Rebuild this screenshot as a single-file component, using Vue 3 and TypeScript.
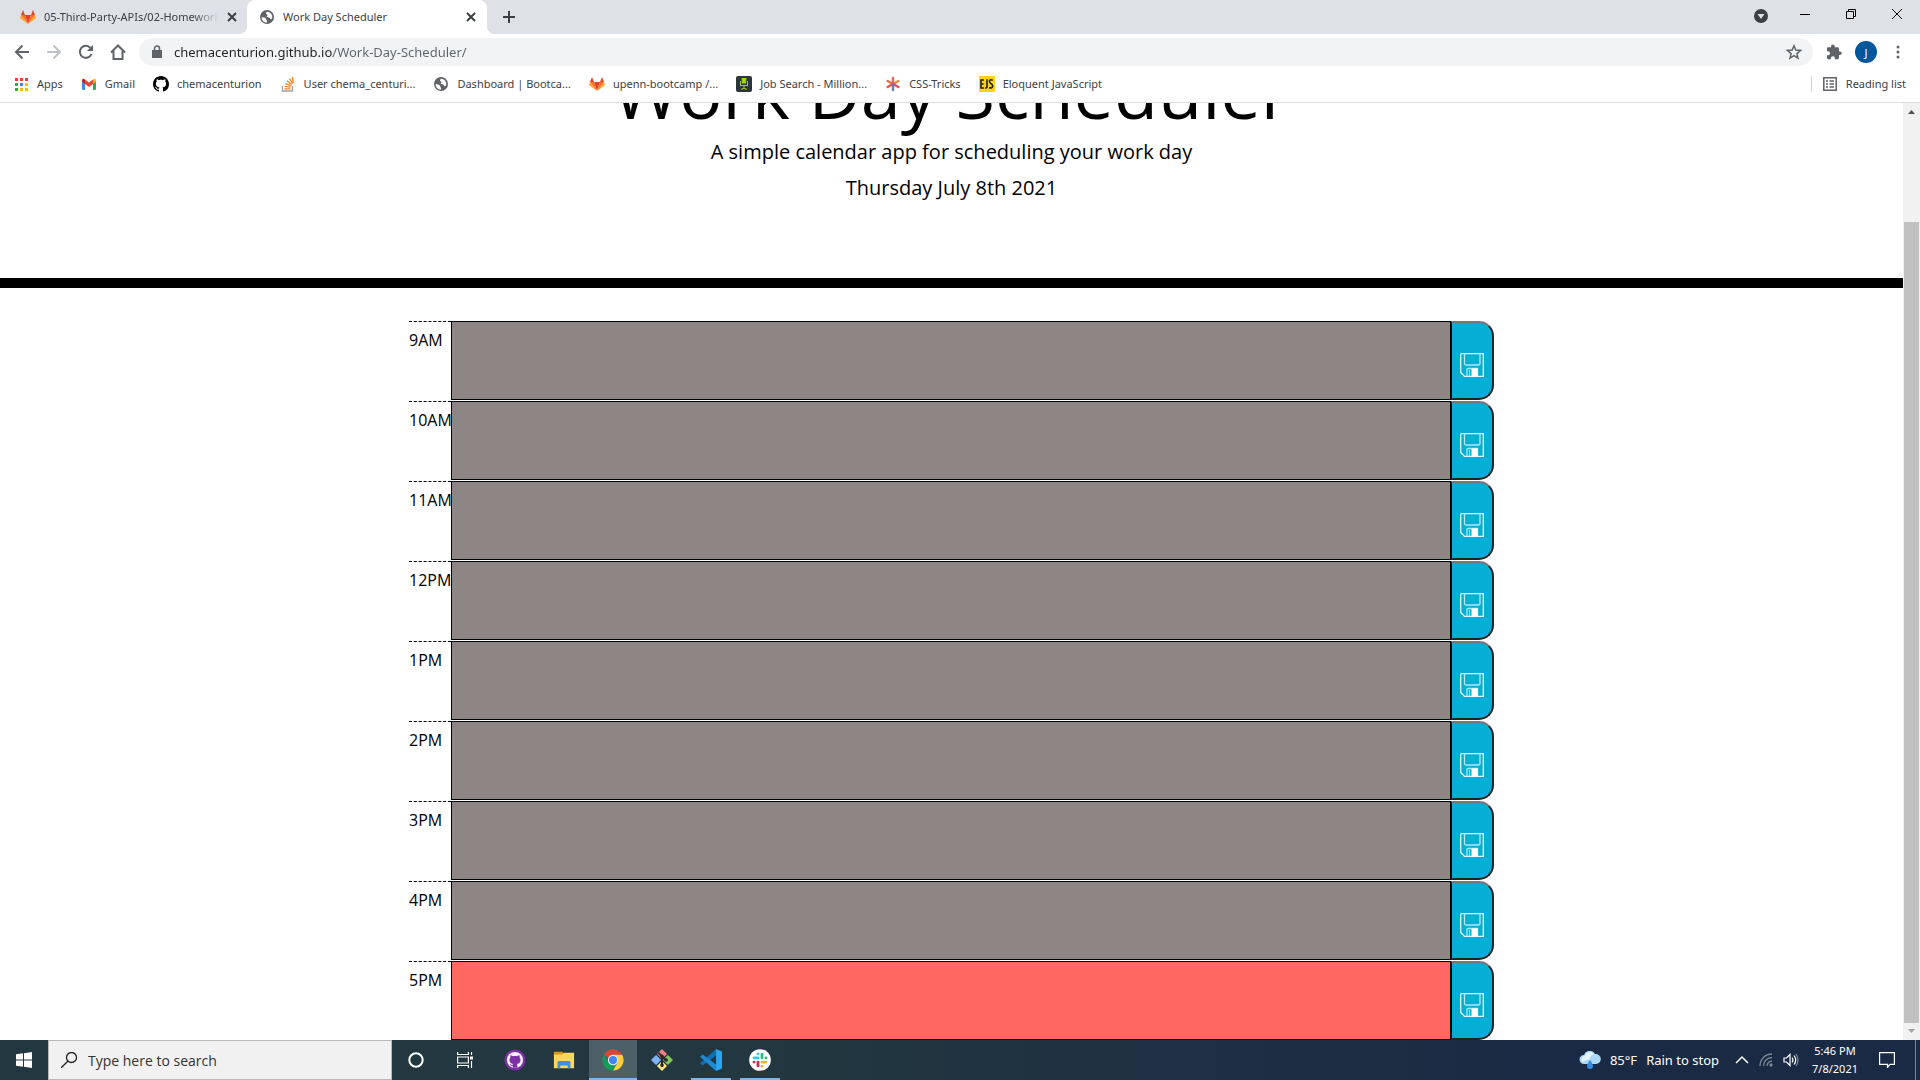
<script setup lang="ts">
import { reactive, ref } from 'vue'

interface Bookmark {
  label: string
  icon: string
}

interface Slot {
  hour: string
  state: 'past' | 'present' | 'future'
  note: string
}

interface TaskApp {
  name: string
  icon: string
  state: '' | 'open' | 'active'
}

const address = ref('chemacenturion.github.io/Work-Day-Scheduler/')
const query = ref('')

const bookmarks: Bookmark[] = [
  { label: 'Apps', icon: 'apps' },
  { label: 'Gmail', icon: 'gmail' },
  { label: 'chemacenturion', icon: 'github' },
  { label: 'User chema_centuri...', icon: 'stack' },
  { label: 'Dashboard | Bootca...', icon: 'globe' },
  { label: 'upenn-bootcamp /...', icon: 'gitlab' },
  { label: 'Job Search - Million...', icon: 'chair' },
  { label: 'CSS-Tricks', icon: 'asterisk' },
  { label: 'Eloquent JavaScript', icon: 'ejs' },
]

const hours = ['9AM', '10AM', '11AM', '12PM', '1PM', '2PM', '3PM', '4PM', '5PM']
const slots = reactive<Slot[]>(
  hours.map((hour) => ({ hour, state: hour === '5PM' ? 'present' : 'past', note: '' })),
)

const apps: TaskApp[] = [
  { name: 'GitHub Desktop', icon: 'desktop', state: '' },
  { name: 'File Explorer', icon: 'folder', state: '' },
  { name: 'Google Chrome', icon: 'chrome', state: 'active' },
  { name: 'Git', icon: 'git', state: '' },
  { name: 'Visual Studio Code', icon: 'vscode', state: 'open' },
  { name: 'Slack', icon: 'slack', state: 'open' },
]

function save(slot: Slot) {
  localStorage.setItem(slot.hour, slot.note)
}
</script>

<template>
  <div class="screen">
    <svg class="sprite" aria-hidden="true">
      <symbol id="gitlab" viewBox="0 0 16 16">
        <path fill="#e24329" d="M8 15 11 6H5z" />
        <path fill="#fc6d26" d="M8 15 5 6H1zM8 15 11 6h4z" />
        <path fill="#fca326" d="M1 6 0 9l8 6zM15 6l1 3-8 6z" />
        <path fill="#e24329" d="M1 6h4L3 1zM15 6h-4l2-5z" />
      </symbol>
      <symbol id="globe" viewBox="0 0 16 16">
        <circle cx="8" cy="8" r="7" fill="#5f6368" />
        <path fill="#fff" d="M2.500 8.200c2 0 3.400.2 4.300 1.200.8.9.2 1.600 1 2 .6.4.2 1.500.2 2.100-3 .1-5.400-2.300-5.500-5.300zM8.500 2.800c-1.200.5-1.700 1-1.500 1.800.2.700 1.400.600 1.500 1.400.1.900-1 1-.8 1.800.2.900 2.300.3 3 1.200.5.700.400 1.300 1.200 1.300.9 0 1.400-1.300 1.400-2.600C13 5 11 3 8.500 2.800z" />
      </symbol>
      <symbol id="apps" viewBox="0 0 16 16">
        <path fill="#ea4335" d="M2 2h3v3H2zM7 2h3v3H7zM12 2h3v3h-3z" />
        <path fill="#34a853" d="M2 7h3v3H2zM2 12h3v3H2z" />
        <path fill="#4285f4" d="M7 7h3v3H7z" />
        <path fill="#fbbc04" d="M12 7h3v3h-3zM7 12h3v3H7zM12 12h3v3h-3z" />
      </symbol>
      <symbol id="gmail" viewBox="0 0 16 16">
        <path fill="#4285f4" d="M1 4.500 4 7v7H2q-1 0-1-1z" />
        <path fill="#34a853" d="M15 4.500 12 7v7h2q1 0 1-1z" />
        <path fill="#ea4335" d="M4 3.500 8 6.500l4-3V8l-4 3-4-3z" />
        <path fill="#c5221f" d="M1 4.500C1 2.500 2.800 2.500 4 3.500V8L1 5.600z" />
        <path fill="#fbbc04" d="M15 4.500c0-2-1.800-2-3-1V8l3-2.400z" />
      </symbol>
      <symbol id="github" viewBox="0 0 16 16">
        <path d="M8 0C3.580 0 0 3.580 0 8c0 3.540 2.290 6.530 5.470 7.590.4.070.55-.17.55-.38 0-.19-.01-.82-.01-1.490-2.010.37-2.530-.49-2.690-.94-.09-.23-.48-.94-.82-1.130-.28-.15-.68-.52-.01-.53.63-.01 1.080.58 1.230.82.72 1.210 1.870.87 2.330.66.07-.52.28-.87.51-1.070-1.780-.2-3.640-.89-3.640-3.950 0-.87.31-1.590.82-2.150-.08-.2-.36-1.020.08-2.120 0 0 .67-.21 2.200.82.64-.18 1.320-.27 2-.27s1.360.09 2 .27c1.530-1.040 2.200-.82 2.200-.82.44 1.100.16 1.920.08 2.120.51.56.82 1.270.82 2.150 0 3.070-1.870 3.750-3.650 3.950.29.25.54.73.54 1.480 0 1.070-.01 1.930-.01 2.200 0 .21.15.46.55.38A8.010 8.010 0 0 0 16 8c0-4.420-3.580-8-8-8z" />
      </symbol>
      <symbol id="stack" viewBox="0 0 16 16">
        <path fill="none" stroke="#9da2a6" stroke-width="1.300" d="M2.500 10v5h10v-5" />
        <path fill="none" stroke="#f48024" stroke-width="1.300" d="M4.500 12.800h6M4.600 10.300l6 .9M5.300 7.600l5.600 2M6.900 4.800l4.800 3.600M9.300 2.500l3.400 5M12.300 1l1 5.800" />
      </symbol>
      <symbol id="chair" viewBox="0 0 16 16">
        <rect width="16" height="16" rx="2" fill="#2c353c" />
        <path fill="#9fd414" d="M5.500 2h5l-.5 5.500H6zM4 5h1v4h6V5h1v5H4zM7.500 10h1v2h-1zM5 13l3-1.500 3 1.500v1l-3-1.200L5 14z" />
      </symbol>
      <symbol id="asterisk" viewBox="0 0 16 16">
        <g fill="none" stroke-width="2.400" stroke-linecap="round">
          <path stroke="#ec6a4c" d="M8 8V2M8 8 2.600 5" />
          <path stroke="#e8533c" d="M8 8 2.600 11" />
          <path stroke="#f0883e" d="m8 8 5.400-3" />
          <path stroke="#d84b7a" d="m8 8 5.400 3" />
          <path stroke="#5a7fb8" d="M8 9v5" />
        </g>
      </symbol>
      <symbol id="ejs" viewBox="0 0 16 16">
        <rect width="16" height="16" fill="#fdd41c" />
        <path fill="none" stroke="#222" stroke-width="1.600" d="M5 4H2v8h3M2 8h2.600M8 3.200V11q0 1.200-2 1M13.800 4.200Q10.300 3 10.500 5.500c0 2 3.200 2.500 3.200 4.600q-.2 2.300-3.700 1.600" />
      </symbol>
      <symbol id="desktop" viewBox="0 0 24 24">
        <circle cx="12" cy="12" r="11.500" fill="#7d2fa3" />
        <circle cx="12" cy="12" r="8.800" fill="#f4eef8" />
        <path fill="#7d2fa3" d="M9.500 20.500v-2.300c-2 .4-2.700-.8-3.300-1.700.9-.1 1.500 1.200 3.300.8l.4-1c-2.500-.4-3.900-1.600-3.900-4.300 0-1.200.4-2 1-2.700-.2-.8-.1-1.700.2-2.500 1 0 1.800.5 2.500 1 1.500-.4 3.100-.4 4.600 0 .7-.5 1.500-1 2.500-1 .3.800.4 1.700.2 2.500.6.7 1 1.500 1 2.700 0 2.700-1.400 3.900-3.900 4.300.3.400.5.900.5 1.700v2.500z" />
      </symbol>
      <symbol id="folder" viewBox="0 0 24 24">
        <path fill="#d99a10" d="M1 3h9l2 2v3H1z" />
        <path fill="#ffd65c" d="M1 6h9l2-2h11v17H1z" />
        <path fill="#3a94dc" d="M5 21v-6.500q0-1.500 1.500-1.500h11q1.500 0 1.500 1.500V21h-3v-3H8v3z" />
      </symbol>
      <symbol id="chrome" viewBox="0 0 24 24">
        <path fill="#db4437" d="M12 12 2.040 6.250A11.500 11.500 0 0 1 21.960 6.250H12z" />
        <path fill="#0f9d58" d="M2.040 6.250A11.500 11.500 0 0 0 12 23.500L17 14.900 12 12l-5 2.900z" />
        <path fill="#ffcd40" d="M21.960 6.250A11.500 11.500 0 0 1 12 23.500l5-8.600-.1-5.800L12 6.250z" />
        <circle cx="12" cy="12" r="5.600" fill="#f1f1f1" />
        <circle cx="12" cy="12" r="4.500" fill="#4285f4" />
      </symbol>
      <symbol id="git" viewBox="0 0 24 24">
        <path fill="#f47c7c" d="m12 0 5.500 5.500L12 11 6.500 5.500z" />
        <path fill="#80b3ff" d="m5.500 6.500 5.500 5.500-5.500 5.500L0 12z" />
        <path fill="#7ecb5c" d="m18.500 6.500L24 12l-5.500 5.500L13 12z" />
        <path fill="#ffe680" d="m12 13 5.500 5.500L12 24l-5.500-5.500z" />
        <path fill="none" stroke="#2a2a2a" stroke-width="2.200" d="M8 4l4 4v11M12 8l4 4" />
        <circle cx="12" cy="8" r="2" fill="#2a2a2a" />
        <circle cx="16.500" cy="12" r="2" fill="#2a2a2a" />
        <circle cx="12" cy="17.500" r="2" fill="#2a2a2a" />
      </symbol>
      <symbol id="vscode" viewBox="0 0 24 24">
        <path fill="#0f6fb5" d="M17.500 0v7L3 18 0 15.500z" />
        <path fill="#1e8ad2" d="M0 8.500 3 6l14.500 11v7z" />
        <path fill="#2aa5ee" d="M17.500 0 24 2.700v18.600L17.500 24z" />
      </symbol>
      <symbol id="slack" viewBox="0 0 24 24">
        <circle cx="12" cy="12" r="11.800" fill="#fff" />
        <g fill="none" stroke-width="3" stroke-linecap="round">
          <path stroke="#36c5f0" d="M5.500 9.700h4.300M9.800 5.300v.1" />
          <path stroke="#2eb67d" d="M14.200 5.500v4.200M18.500 9.700h.1" />
          <path stroke="#ecb22e" d="M14.200 14.200h4.300M14.200 18.600v.1" />
          <path stroke="#e01e5a" d="M9.800 14.200v4.300M5.500 14.200h-.1" />
        </g>
      </symbol>
      <symbol id="floppy" viewBox="0 0 24 24">
        <path fill="none" stroke="#e4f9fd" stroke-width="1.300" d="M.7 1.700q0-1 1-1h21.600v22.600H4.500L.7 19.500z" />
        <path fill="none" stroke="#aee9f5" stroke-width="1.300" d="M4.500.5v10q0 1.500 1.500 1.500h12.500q1.500 0 1.500-1.500V.5M7 23.500v-7q0-1 1-1h9.500v8" />
        <path fill="#fff" d="M11.500 15.500h6.500v8h-6.500z" />
        <path stroke="#9be3f2" d="M9.500 17v6" />
      </symbol>
    </svg>

    <nav class="tabs" aria-label="Tabs">
      <div class="tab first">
        <svg class="i16"><use href="#gitlab" /></svg>
        <span class="tab-title fade">05-Third-Party-APIs/02-Homework</span>
        <button class="plain" aria-label="Close tab">
          <svg width="10" height="10" stroke="#3c4043" stroke-width="2"><path d="m1 1 8 8M9 1 1 9" /></svg>
        </button>
      </div>
      <div class="tab current">
        <svg class="i16"><use href="#globe" /></svg>
        <span class="tab-title">Work Day Scheduler</span>
        <button class="plain" aria-label="Close tab">
          <svg width="10" height="10" stroke="#3c4043" stroke-width="2"><path d="m1 1 8 8M9 1 1 9" /></svg>
        </button>
      </div>
      <button class="plain add" aria-label="New tab">
        <svg width="12" height="12" stroke="#3c4043" stroke-width="2"><path d="M6 0v12M0 6h12" /></svg>
      </button>
      <div class="window-buttons">
        <button class="plain" aria-label="Search tabs">
          <svg width="14" height="14"><circle cx="7" cy="7" r="7" fill="#3c4043" /><path fill="#dee1e6" d="M3.500 5h7L7 10z" /></svg>
        </button>
        <button class="plain" aria-label="Minimize">
          <svg width="10" height="10"><path fill="#000" d="M0 5h10v1H0z" /></svg>
        </button>
        <button class="plain" aria-label="Restore">
          <svg width="10" height="10" fill="none" stroke="#000"><path d="M.5 2.500h7v7h-7zM2.500 2.500v-2h7v7h-2" /></svg>
        </button>
        <button class="plain" aria-label="Close">
          <svg width="10" height="10" stroke="#000"><path d="m0 0 10 10M10 0 0 10" /></svg>
        </button>
      </div>
    </nav>

    <div class="toolbar">
      <div class="nav-buttons">
        <button class="plain" aria-label="Back">
          <svg class="i16" fill="none" stroke="#5f6368" stroke-width="2"><path d="M15 8H2M8.500 1.500 2 8l6.500 6.500" /></svg>
        </button>
        <button class="plain" aria-label="Forward">
          <svg class="i16" fill="none" stroke="#bdc1c6" stroke-width="2"><path d="M1 8h13M7.500 1.500 14 8l-6.500 6.500" /></svg>
        </button>
        <button class="plain" aria-label="Reload">
          <svg class="i16"><path fill="none" stroke="#5f6368" stroke-width="2" d="M13.500 10A6 6 0 1 1 12.500 4" /><path fill="#5f6368" d="M15 1v6H9z" /></svg>
        </button>
        <button class="plain" aria-label="Home">
          <svg class="i16" fill="none" stroke="#5f6368" stroke-width="2"><path d="M1 8.500 8 1.500l7 7M3.500 7v8h9V7" /></svg>
        </button>
      </div>
      <label class="omnibox">
        <svg width="10" height="14"><path fill="#5f6368" d="M0 5h10v8H0z" /><path fill="none" stroke="#5f6368" stroke-width="1.500" d="M2.500 5.500V3.500a2.500 2.500 0 0 1 5 0v2" /></svg>
        <input v-model="address" type="text" aria-label="Address" />
        <button class="plain" aria-label="Bookmark this page">
          <svg class="i16" fill="none" stroke="#5f6368" stroke-width="1.500"><path d="m8 1.800 1.800 4.300 4.700.4-3.600 3.100 1.100 4.600L8 11.700l-4 2.500 1.100-4.600-3.600-3.100 4.700-.4z" /></svg>
        </button>
      </label>
      <button class="plain" aria-label="Extensions">
        <svg class="i16" fill="#5f6368"><path d="M14 7.500h-1V4.600q0-1.400-1.400-1.400H8.800V2.400a1.900 1.900 0 0 0-3.800 0v.8H2.300Q1 3.200 1 4.600v2.600h1a2 2 0 0 1 0 4.100H1v2.500q0 1.400 1.300 1.400h2.600v-1a2 2 0 0 1 4 0v1h2.700q1.400 0 1.400-1.400v-2.700h1a1.800 1.800 0 0 0 0-3.600z" /></svg>
      </button>
      <button class="plain avatar" aria-label="Profile">J</button>
      <button class="plain" aria-label="Menu">
        <svg class="i16" fill="#5f6368"><circle cx="8" cy="3" r="1.500" /><circle cx="8" cy="8" r="1.500" /><circle cx="8" cy="13" r="1.500" /></svg>
      </button>
    </div>

    <nav class="bookmarks" aria-label="Bookmarks">
      <a v-for="mark in bookmarks" :key="mark.label" href="#">
        <svg class="i16"><use :href="'#' + mark.icon" /></svg>{{ mark.label }}
      </a>
      <a class="reading" href="#">
        <svg class="i16" fill="none" stroke="#5f6368" stroke-width="1.500"><path d="M1.800 1.800h12.400v12.400H1.800zM4 5h2M7.500 5H12M4 8h2M7.500 8H12M4 11h2M7.500 11H12" /></svg>Reading list
      </a>
    </nav>

    <div class="viewport">
      <main class="page">
        <header>
          <h1>Work Day Scheduler</h1>
          <p>A simple calendar app for scheduling your work day</p>
          <p>Thursday July 8th 2021</p>
        </header>
        <section class="planner">
          <div v-for="slot in slots" :key="slot.hour" class="row">
            <label :for="'slot-' + slot.hour">{{ slot.hour }}</label>
            <textarea :id="'slot-' + slot.hour" v-model="slot.note" :class="slot.state"></textarea>
            <button :aria-label="'Save ' + slot.hour" @click="save(slot)">
              <svg width="24" height="24"><use href="#floppy" /></svg>
            </button>
          </div>
        </section>
      </main>
      <div class="scrollbar" aria-hidden="true">
        <svg width="17" height="17"><path fill="#505050" d="M5 11h7L8.500 7z" /></svg>
        <div class="track"><div class="thumb"></div></div>
        <svg width="17" height="17"><path fill="#a3a3a3" d="M5 6h7l-3.500 4z" /></svg>
      </div>
    </div>

    <footer class="taskbar">
      <button class="plain start" aria-label="Start">
        <svg class="i16" fill="#fff"><path d="M0 2.300 7 1.300V7.500H0zM8 1.200 16 0v7.500H8zM0 8.500h7v6.200l-7-1zM8 8.500h8V16l-8-1.200z" /></svg>
      </button>
      <label class="search">
        <svg class="i16" fill="none" stroke="#222" stroke-width="1.300"><circle cx="10.500" cy="5.500" r="5" /><path d="M7 9 0 16" /></svg>
        <input v-model="query" type="text" placeholder="Type here to search" aria-label="Search" />
      </label>
      <button class="plain app" aria-label="Cortana">
        <svg class="i16" fill="none" stroke="#fff" stroke-width="2"><circle cx="8" cy="8" r="6.700" /></svg>
      </button>
      <button class="plain app views" aria-label="Task View">
        <svg class="i16" fill="none" stroke="#fff" stroke-width="1.200"><path d="M.6 0v2.500h10.800V0M.6 5h10.800v6H.6zM.6 16v-2.500h10.800V16M14.500 0v3M14.500 9v7" /><path fill="#fff" stroke="none" d="M13 4.500h3v3h-3z" /></svg>
      </button>
      <button v-for="app in apps" :key="app.name" class="plain app" :class="app.state" :aria-label="app.name">
        <svg :width="22" :height="22"><use :href="'#' + app.icon" /></svg>
      </button>
      <div class="tray">
        <button class="plain weather">
          <svg width="22" height="18" viewBox="0 0 22 18"><path fill="#a9d8f7" d="M5 13a4.500 4.500 0 0 1 0-9 6 6 0 0 1 11-1 5 5 0 0 1 1.500 10z" /><path fill="#e4f3fd" d="M4 11.500a4 4 0 0 1 2-7 5 5 0 0 1 9-1c-4 0-3 4-5 5s-4 0-6 3z" /><path fill="#2e8be6" d="M11 9q3 4 3 6a3 3 0 0 1-6 0q0-2 3-6z" /></svg>
          <span>85°F</span><span>Rain to stop</span>
        </button>
        <button class="plain" aria-label="Show hidden icons">
          <svg width="14" height="14" fill="none" stroke="#fff" stroke-width="1.500"><path d="m1 10 6-6 6 6" /></svg>
        </button>
        <button class="plain" aria-label="Network">
          <svg width="14" height="14" fill="none" stroke="#7d8796" stroke-width="1.300"><path d="M1 13A12 12 0 0 1 13 1M4.500 13A8.500 8.500 0 0 1 13 4.500M8 13a5 5 0 0 1 5-5" /><circle cx="12" cy="12" r="1" fill="#7d8796" /></svg>
        </button>
        <button class="plain" aria-label="Volume">
          <svg class="i16" fill="none" stroke="#fff" stroke-width="1.200"><path d="M1 6h2.500L7 2.500v11L3.500 10H1zM9 5.500q2 2.500 0 5M11 3.500q3.500 4.500 0 9" /><path stroke="#7d8796" d="M13 2q4 6 0 12" /></svg>
        </button>
        <button class="plain clock"><span>5:46 PM</span><span>7/8/2021</span></button>
        <button class="plain" aria-label="Notifications">
          <svg class="i16" fill="none" stroke="#fff" stroke-width="1.200"><path d="M.6.6h14.800v11.800H11l-2.500 3v-3H.6z" /></svg>
        </button>
        <button class="plain show-desktop" aria-label="Show desktop"></button>
      </div>
    </footer>
  </div>
</template>

<style>
body {
  margin: 0;
}
</style>

<style scoped>
.screen {
  display: flex;
  flex-direction: column;
  height: 100vh;
  overflow: hidden;
  background: #fff;
  font-family: "Noto Sans", "Open Sans", sans-serif;
  font-size: 11px;
  color: #3c4043;
}

.screen * {
  box-sizing: border-box;
}

.sprite {
  display: block;
  width: 0;
  height: 0;
}

svg {
  display: block;
  flex: none;
}

.i16 {
  width: 16px;
  height: 16px;
}

.plain {
  display: flex;
  align-items: center;
  justify-content: center;
  flex: none;
  padding: 0;
  border: 0;
  background: none;
  font: inherit;
  color: inherit;
}

.tabs {
  display: flex;
  flex: none;
  height: 34px;
  background: #dee1e6;
}

.tab {
  position: relative;
  display: flex;
  align-items: center;
  gap: 8px;
  width: 240px;
  padding: 0 11px 1px 12px;
}

.tab.first {
  width: 247px;
  padding: 0 10px 1px 20px;
}

.tab-title {
  flex: 1;
  overflow: hidden;
  white-space: nowrap;
}

.fade {
  -webkit-mask-image: linear-gradient(90deg, #000 85%, transparent);
  mask-image: linear-gradient(90deg, #000 85%, transparent);
}

.current {
  background: #fff;
  border-radius: 8px 8px 0 0;
}

.current::before,
.current::after {
  content: "";
  position: absolute;
  bottom: 0;
  width: 8px;
  height: 8px;
}

.current::before {
  right: 100%;
  background: radial-gradient(circle at 0 0, transparent 8px, #fff 8px);
}

.current::after {
  left: 100%;
  background: radial-gradient(circle at 100% 0, transparent 8px, #fff 8px);
}

.add {
  margin-left: 16px;
}

.window-buttons {
  display: flex;
  align-items: center;
  gap: 36px;
  margin-left: auto;
  padding: 0 18px 6px 0;
}

.window-buttons .plain:first-child {
  margin: 4px -4px 0 0;
}

.toolbar {
  display: flex;
  align-items: center;
  flex: none;
  gap: 13px;
  height: 36px;
  padding: 0 14px;
}

.nav-buttons {
  display: flex;
  gap: 16px;
}

.omnibox {
  display: flex;
  flex: 1;
  align-items: center;
  gap: 12px;
  height: 28px;
  padding: 0 11px 0 13px;
  border-radius: 14px;
  background: #f1f3f4;
}

.omnibox input {
  flex: 1;
  min-width: 0;
  padding: 0;
  border: 0;
  outline: 0;
  font: 13px "Noto Sans", "Open Sans", sans-serif;
  color: transparent;
  background: linear-gradient(90deg, #202124 159px, #5f6368 159px);
  -webkit-background-clip: text;
  background-clip: text;
}

.avatar {
  width: 22px;
  height: 22px;
  border-radius: 50%;
  background: #01579b;
  color: #fff;
}

.bookmarks {
  display: flex;
  align-items: center;
  flex: none;
  gap: 18px;
  height: 33px;
  padding: 0 14px 5px 13px;
  border-bottom: 1px solid #dadce0;
}

.bookmarks a {
  display: flex;
  align-items: center;
  gap: 8px;
  color: #3c4043;
  white-space: nowrap;
  text-decoration: none;
}

.bookmarks .reading {
  margin-left: auto;
  padding-left: 10px;
  border-left: 1px solid #cfd1d5;
}

.viewport {
  display: flex;
  flex: 1;
  min-height: 0;
}

.page {
  display: flex;
  flex: 1;
  flex-direction: column;
  justify-content: flex-end;
  overflow: hidden;
  font-family: "Open Sans", "Noto Sans", sans-serif;
  color: #000;
}

header {
  flex: none;
  height: 240px;
  margin-bottom: 33px;
  border-bottom: 10px solid #000;
  text-align: center;
}

h1 {
  margin: 0 0 3px;
  font-size: 72px;
  font-weight: 400;
  line-height: 86px;
}

header p {
  margin: 0 0 6px;
  font-size: 20px;
  line-height: 30px;
}

.planner {
  flex: none;
  width: 100%;
  max-width: 1085px;
  margin: 0 auto;
}

.row {
  display: flex;
  height: 80px;
  padding-bottom: 1px;
}

.planner .row:last-child {
  height: 79px;
  padding-bottom: 0;
}

.row label {
  flex: none;
  width: 42px;
  padding-top: 6px;
  border-top: 1px dashed #000;
  font-size: 16px;
  line-height: 24px;
}

.row textarea {
  flex: 1;
  min-width: 0;
  margin: 0;
  padding: 4px;
  border: 1px solid #000;
  outline: 0;
  resize: none;
  font: 16px "Open Sans", sans-serif;
}

.past {
  background: #8d8685;
}

.present {
  background: #ff6961;
}

.future {
  background: #77dd77;
}

.row button {
  display: flex;
  align-items: center;
  justify-content: center;
  flex: none;
  width: 43px;
  padding: 8px 0 0;
  border: 2px solid #222;
  border-top-color: #767676;
  border-left: 1px solid #000;
  border-radius: 0 15px 15px 0;
  background: #06aed5;
}

.scrollbar {
  display: flex;
  flex-direction: column;
  flex: none;
  width: 17px;
  background: #f1f1f1;
}

.track {
  display: flex;
  flex: 1;
  flex-direction: column;
}

.track::before {
  content: "";
  flex: 102;
}

.thumb {
  flex: 801;
  margin: 0 1px;
  background: #c1c1c1;
}

.taskbar {
  display: flex;
  flex: none;
  height: 40px;
  background: linear-gradient(90deg, #22373f 40%, #1b2a44 80%);
  color: #fff;
}

.start {
  width: 48px;
}

.search {
  display: flex;
  align-items: center;
  gap: 11px;
  width: 344px;
  padding: 0 12px;
  border: 1px solid #b8b8b8;
  background: #f1f1f1;
}

.search input {
  flex: 1;
  min-width: 0;
  padding: 0;
  border: 0;
  outline: 0;
  background: none;
  font: 14px "Open Sans", "Noto Sans", sans-serif;
}

.search input::placeholder {
  color: #333;
}

.app {
  width: 48px;
  margin-right: 1px;
  border-bottom: 2px solid transparent;
  border-top: 2px solid transparent;
}

.views {
  width: 47px;
  margin-right: 3px;
}

.app.active {
  background: #4e6067;
  border-top-color: #4e6067;
  border-bottom-color: #76b9ed;
}

.app.open {
  width: 40px;
  margin: 0 5px 0 4px;
  border-bottom-color: #76b9ed;
}

.tray {
  display: flex;
  align-items: center;
  gap: 10px;
  margin-left: auto;
}

.weather {
  gap: 9px;
  margin-right: 6px;
  font-size: 13px;
}

.clock {
  flex-direction: column;
  width: 52px;
  line-height: 18px;
}

.tray .clock {
  margin: 0 8px 0 0;
}

.show-desktop {
  align-self: stretch;
  width: 5px;
  margin-left: 10px;
  border-left: 1px solid #7a8596;
}
</style>
